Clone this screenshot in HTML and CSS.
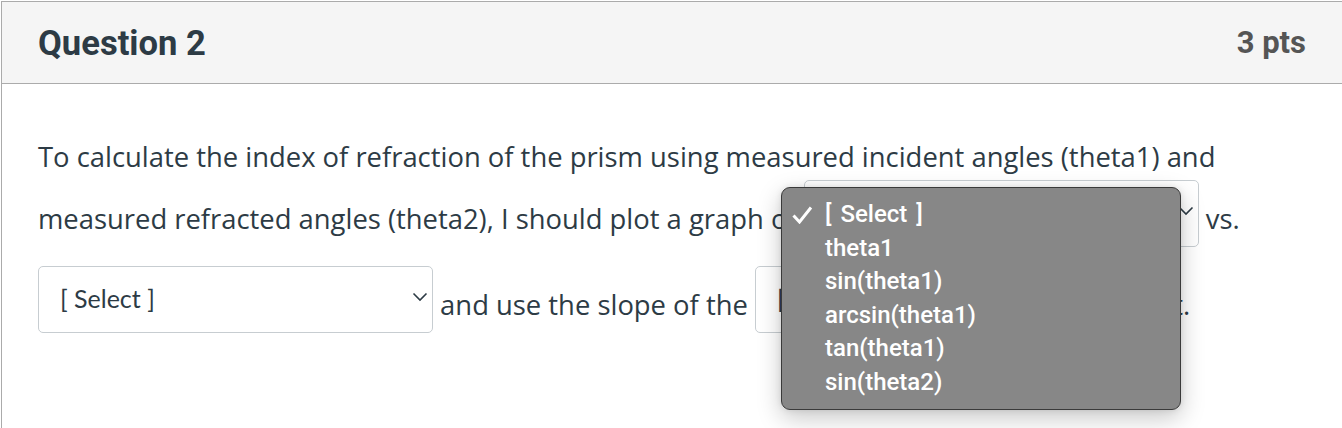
FILE: index.html
```html
<!DOCTYPE html>
<html>
<head>
<meta charset="utf-8">
<link rel="stylesheet" href="styles.css">
</head>
<body>
<div class="card">
  <div class="card-header">
    <h2 class="title">Question 2</h2>
    <span class="pts">3 pts</span>
  </div>
  <div class="card-body">
    <p class="question">To calculate the index of refraction of the prism using measured incident angles (theta1) and measured refracted angles (theta2), I should plot a graph of <span class="select"><span class="sel-inner"><span class="sel-text">[ Select ]</span><svg class="chev" viewBox="0 0 16 10" width="16" height="10"><path d="M1.5 1.5 L8 8 L14.5 1.5" fill="none" stroke="#2d3b45" stroke-width="1.6"/></svg></span></span> vs. <span class="select"><span class="sel-inner"><span class="sel-text">[ Select ]</span><svg class="chev" viewBox="0 0 16 10" width="16" height="10"><path d="M1.5 1.5 L8 8 L14.5 1.5" fill="none" stroke="#2d3b45" stroke-width="1.6"/></svg></span></span> and use the slope of the <span class="select"><span class="sel-inner"><span class="sel-text">[ Select ]</span><svg class="chev" viewBox="0 0 16 10" width="16" height="10"><path d="M1.5 1.5 L8 8 L14.5 1.5" fill="none" stroke="#2d3b45" stroke-width="1.6"/></svg></span></span> fit.</p>
  </div>
</div>
<div class="popup">
  <div class="opt"><svg class="check" viewBox="0 0 22 18" width="22" height="18"><path d="M2.5 9.5 L8.5 16 L20 1.5" fill="none" stroke="#fff" stroke-width="3"/></svg><span class="first">[ Select ]</span></div>
  <div class="opt">theta1</div>
  <div class="opt">sin(theta1)</div>
  <div class="opt">arcsin(theta1)</div>
  <div class="opt">tan(theta1)</div>
  <div class="opt">sin(theta2)</div>
</div>
</body>
</html>
```
FILE: styles.css
```css
html, body {
  margin: 0;
  padding: 0;
  background: #fff;
  overflow: hidden;
}
body {
  width: 1342px;
  height: 428px;
  padding: 1px 0 0 1px;
  box-sizing: border-box;
  position: relative;
}
.card {
  border: 1px solid #ababab;
  border-right: none;
  height: 500px;
}
.card-header {
  background: #f5f5f5;
  border-bottom: 1px solid #ababab;
  height: 81px;
  display: flex;
  align-items: center;
  justify-content: space-between;
  padding: 0 36px 0 36px;
  font-family: Roboto, "Liberation Sans", sans-serif;
}
.title {
  margin: 0;
  font-size: 34.6px;
  font-weight: 700;
  color: #2d3b45;
}
.pts {
  font-size: 31px;
  font-weight: 700;
  color: #555;
}
.card-body {
  padding: 55px 50px 0 36px;
}
.question {
  margin: 0;
  font-family: "Open Sans", "Liberation Sans", sans-serif;
  font-size: 27.4px;
  line-height: 36px;
  color: #2d3b45;
}
.select {
  display: inline-block;
  box-sizing: border-box;
  width: 395px;
  height: 67px;
  border: 1px solid #c7cdd1;
  border-radius: 5px;
  margin: 5px 0 14px;
  vertical-align: -32px;
  overflow: hidden;
  background: #fff;
}
.sel-inner {
  display: flex;
  align-items: center;
  justify-content: space-between;
  height: 100%;
  padding: 0 4px 0 21px;
}
.sel-text {
  font-family: Lato, sans-serif;
  font-size: 25px;
  line-height: 30px;
  color: #2d3b45;
  margin-top: -4px;
}
.chev {
  margin-top: -6px;
}
.popup {
  position: absolute;
  left: 781px;
  top: 187px;
  width: 400px;
  box-sizing: border-box;
  background: #878787;
  border: 1px solid #3a3a3a;
  border-radius: 9px;
  padding: 10px 0 9px;
  box-shadow: 0 8px 24px rgba(0,0,0,0.22), 0 0 6px rgba(0,0,0,0.1);
  font-family: Roboto, "Noto Sans", sans-serif;
  font-weight: 500;
  font-size: 24px;
  color: #fff;
}
.opt {
  position: relative;
  height: 33.6px;
  line-height: 33.6px;
  padding-left: 43px;
}
.first {
  word-spacing: 3px;
}
.check {
  position: absolute;
  left: 9px;
  top: 8px;
}
```
